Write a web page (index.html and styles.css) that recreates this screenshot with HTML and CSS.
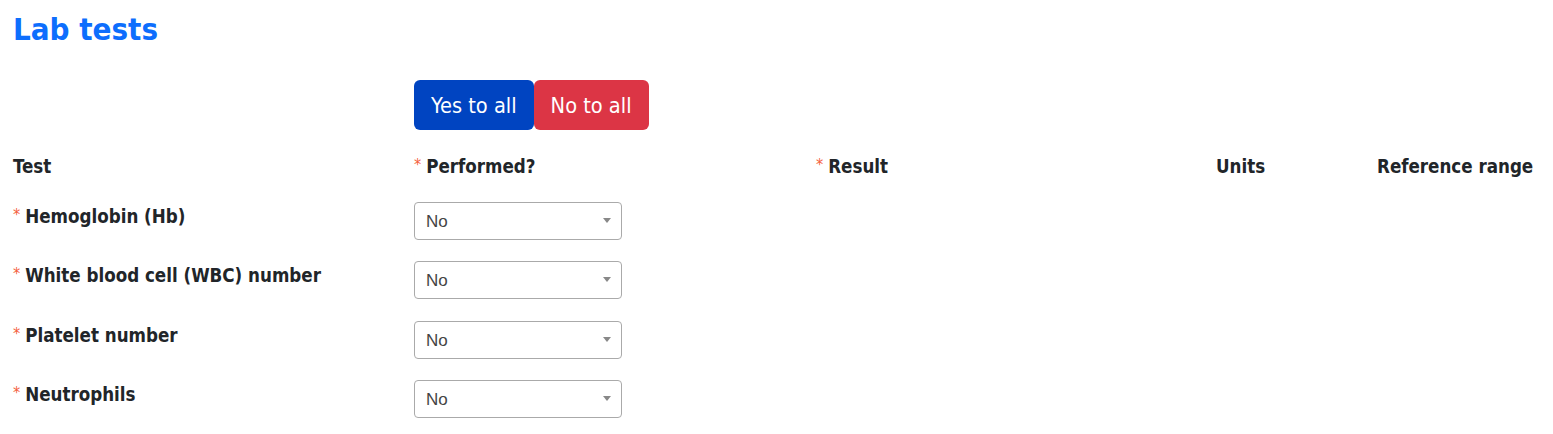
FILE: index.html
```html
<!DOCTYPE html>
<html lang="en">
<head>
<meta charset="utf-8">
<title>Lab tests</title>
<link rel="stylesheet" href="styles.css">
</head>
<body>
<div class="page">
  <h1 class="title">Lab tests</h1>
  <div class="grid toolbar">
    <div></div>
    <div class="btn-group">
      <button class="btn btn-yes" type="button">Yes to all</button>
      <button class="btn btn-no" type="button">No to all</button>
    </div>
  </div>
  <div class="grid head">
    <div class="th">Test</div>
    <div class="th"><span class="req">*</span>Performed?</div>
    <div class="th"><span class="req">*</span>Result</div>
    <div class="th">Units</div>
    <div class="th">Reference range</div>
  </div>
  <div class="grid rows">
    <div class="label"><span class="req">*</span>Hemoglobin (Hb)</div>
    <div><div class="select"><span class="sel-text">No</span><span class="arrow"></span></div></div>
    <div></div><div></div><div></div>

    <div class="label"><span class="req">*</span>White blood cell (WBC) number</div>
    <div><div class="select"><span class="sel-text">No</span><span class="arrow"></span></div></div>
    <div></div><div></div><div></div>

    <div class="label"><span class="req">*</span>Platelet number</div>
    <div><div class="select"><span class="sel-text">No</span><span class="arrow"></span></div></div>
    <div></div><div></div><div></div>

    <div class="label"><span class="req">*</span>Neutrophils</div>
    <div><div class="select"><span class="sel-text">No</span><span class="arrow"></span></div></div>
    <div></div><div></div><div></div>
  </div>
</div>
</body>
</html>
```

FILE: styles.css
```css
html, body {
  margin: 0;
  padding: 0;
  background: #fff;
}
.page {
  padding: 10px 8px 0 13px;
  font-family: "DejaVu Sans", Verdana, sans-serif;
  font-stretch: condensed;
  color: #212529;
}
.title {
  margin: 0;
  font-size: 31px;
  line-height: 38px;
  font-weight: bold;
  color: #0d6efd;
}
.grid {
  display: grid;
  grid-template-columns: 401px 402px 400px 161px 1fr;
}
.toolbar {
  margin-top: 32px;
}
.btn-group {
  display: flex;
}
.btn {
  height: 50px;
  border: none;
  border-radius: 6px;
  padding: 2px 17px 0;
  font-family: "DejaVu Sans", sans-serif;
  font-stretch: condensed;
  font-size: 21.6px;
  line-height: 26px;
  color: #fff;
  cursor: pointer;
}
.btn-yes {
  background: #0044c1;
}
.btn-no {
  background: #dc3545;
}
.head {
  margin-top: 24.6px;
}
.th, .label {
  font-size: 18.6px;
  line-height: 24px;
  font-weight: bold;
  color: #212529;
  white-space: nowrap;
}
.req {
  color: #f4603e;
  font-size: 16px;
  line-height: 0;
  font-weight: normal;
  margin-right: 5px;
  vertical-align: 3px;
}
.rows {
  margin-top: 23.4px;
  row-gap: 21.5px;
}
.label {
  padding-top: 2.6px;
}
.select {
  box-sizing: border-box;
  width: 208px;
  height: 38px;
  border: 1px solid #aaa;
  border-radius: 4px;
  display: flex;
  align-items: center;
  justify-content: space-between;
  padding: 2px 10px 0 11px;
  background: #fff;
}
.sel-text {
  font-family: "Liberation Sans", Arial, sans-serif;
  font-stretch: normal;
  font-size: 17px;
  color: #444;
}
.arrow {
  width: 0;
  height: 0;
  border-style: solid;
  border-width: 5px 4px 0 4px;
  border-color: #888 transparent transparent transparent;
  margin-top: -3px;
}
```
